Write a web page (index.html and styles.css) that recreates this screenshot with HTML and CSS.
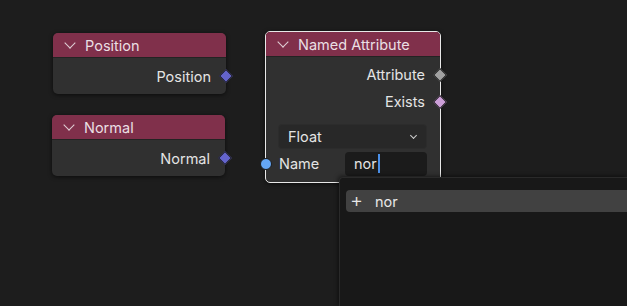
FILE: index.html
```html
<!DOCTYPE html>
<html>
<head>
	<meta charset="utf-8">
	<title>Named Attribute</title>
	<link rel="stylesheet" href="styles.css">
</head>
<body>
<div class="editor">
	<div class="node n-position">
		<div class="head"><span class="chev"></span>Position</div>
		<div class="body">
			<div class="row out">Position<i class="sock vec"></i></div>
		</div>
	</div>

	<div class="node n-normal">
		<div class="head"><span class="chev"></span>Normal</div>
		<div class="body">
			<div class="row out">Normal<i class="sock vec"></i></div>
		</div>
	</div>

	<div class="node n-attr sel">
		<div class="head"><span class="chev"></span>Named Attribute</div>
		<div class="body">
			<div class="row out">Attribute<i class="sock flt"></i></div>
			<div class="row out">Exists<i class="sock bool"></i></div>
			<div class="select">Float<span class="chev small"></span></div>
			<div class="row in">
				<i class="sock str"></i>
				<span class="lbl">Name</span>
				<div class="field">nor<span class="caret"></span></div>
			</div>
		</div>
	</div>

	<div class="popup">
		<div class="item"><span class="plus">+</span>nor</div>
	</div>
</div>
</body>
</html>
```

FILE: styles.css
```css
body,div{margin:0;padding:0;}
body{background:#1d1d1d;font:14.5px "Inter","Noto Sans",sans-serif;color:#e4e4e4;overflow:hidden;}
.editor{position:relative;width:627px;height:306px;background:#1d1d1d;}

.node{position:absolute;width:173px;background:#303030;border-radius:5px;box-shadow:0 1px 4px rgba(0,0,0,0.6);}
.node .head{height:25px;background:#80304b;border-radius:5px 5px 0 0;display:flex;align-items:center;padding-left:10px;color:#eadfe3;border-bottom:1px solid #232323;box-sizing:border-box;}
.node .body{padding:3px 0 7px 0;}
.n-position{left:53px;top:33px;height:61px;}
.n-normal{left:52px;top:115px;height:61px;}
.n-attr{left:265px;top:31px;width:174px;height:150px;border:1px solid #e8e8e8;}
.n-attr .head{border-radius:4px 4px 0 0;}
.n-attr .body{padding-top:4px;}

.chev{display:inline-block;width:7px;height:7px;border-right:1.5px solid #e0d0d6;border-bottom:1.5px solid #e0d0d6;transform:rotate(45deg);margin:-5px 11px 0 3px;}
.chev.small{width:4px;height:4px;border-color:#cfcfcf;margin:-3px 0 0 0;border-width:1.2px;}

.row{position:relative;height:27px;display:flex;align-items:center;}
.row.out{justify-content:flex-end;padding-right:15px;}
.n-position .row,.n-normal .row{height:30px;}

.sock{position:absolute;width:8px;height:8px;transform:rotate(45deg);border:1px solid #1a1a1a;}
.row.out .sock{right:-5px;top:50%;margin-top:-5px;}
.sock.vec{background:#6464cc;}
.sock.flt{background:#a1a1a1;}
.sock.bool{background:#cc9fd8;}
.sock.str{background:#64a6f4;border-radius:50%;transform:none;width:10px;height:10px;left:-6px;top:50%;margin-top:-6px;}

.select{margin:9px 13px 0 12px;height:25px;background:#282828;border-radius:4px;display:flex;align-items:center;justify-content:space-between;padding:0 10px 0 9px;box-sizing:border-box;border:1px solid #2c2c2c;}
.row.in{padding-left:13px;height:29px;}
.lbl{flex:1;}
.field{width:82px;height:24px;margin-right:13px;background:#1b1b1b;border-radius:4px;display:flex;align-items:center;padding-left:9px;box-sizing:border-box;}
.caret{display:inline-block;width:2px;height:19px;background:#4a8fe8;margin-left:1px;}

.popup{position:absolute;left:339px;top:177px;right:0;bottom:0;background:#181818;border-top:1px solid #2a2a2a;border-left:1px solid #2a2a2a;border-radius:4px 0 0 0;padding:12px 0 0 6px;box-shadow:-1px -1px 4px rgba(0,0,0,0.5);}
.item{height:22px;background:#414141;border-radius:4px 0 0 4px;display:flex;align-items:center;color:#e8e8e8;}
.plus{font-size:20px;font-weight:300;width:29px;padding-left:4px;box-sizing:border-box;line-height:1;margin-top:-2px;}
```
